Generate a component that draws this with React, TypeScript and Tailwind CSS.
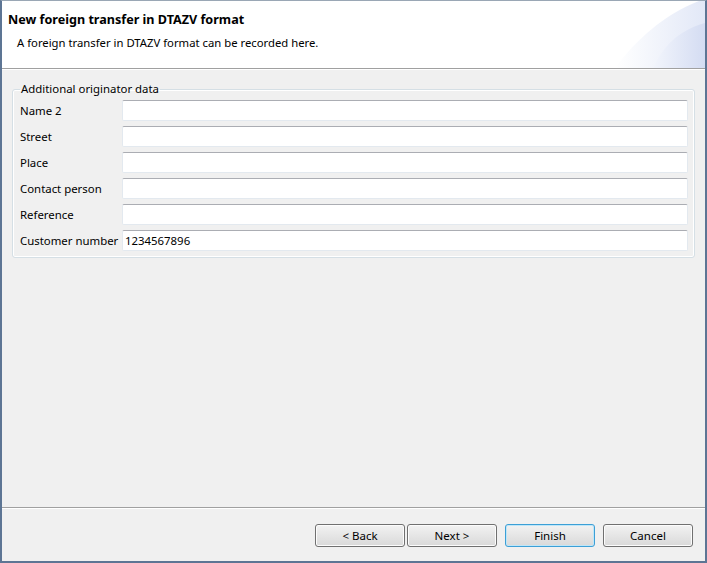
import React from 'react';

const fields = [
  { label: 'Name 2', value: '' },
  { label: 'Street', value: '' },
  { label: 'Place', value: '' },
  { label: 'Contact person', value: '' },
  { label: 'Reference', value: '' },
  { label: 'Customer number', value: '1234567896' },
];

const font = '"Noto Sans", "Open Sans", sans-serif';

const WizardButton = ({ label, primary, className = '' }: { label: string; primary?: boolean; className?: string }) => (
  <button
    className={`w-[90px] h-[23px] shrink-0 rounded-[3px] border text-[11.5px] leading-none text-black bg-gradient-to-b from-[#f2f2f2] to-[#d9d9d9] ${
      primary ? 'border-[#3c9fd6] shadow-[inset_0_0_0_1px_#bfe6f8]' : 'border-[#707070] shadow-[inset_0_0_0_1px_#fcfcfc]'
    } ${className}`}
    style={{ fontFamily: font }}
  >
    {label}
  </button>
);

export default function App() {
  return (
    <div
      className="w-[707px] h-[563px] bg-[#f0f0f0] flex flex-col border-l-2 border-r-2 border-b-2 border-t border-l-[#5d7594] border-r-[#5d7594] border-b-[#5d7594] border-t-[#9aa7b5] overflow-hidden"
      style={{ fontFamily: font }}
    >
      {/* header */}
      <div className="relative h-[67px] bg-white shrink-0 overflow-hidden">
        <svg className="absolute right-0 top-0" width="100" height="67" viewBox="0 0 100 67">
          <defs>
            <linearGradient id="sw1" x1="0" y1="0" x2="1" y2="0">
              <stop offset="0" stopColor="#ffffff" />
              <stop offset="1" stopColor="#e2e8f7" />
            </linearGradient>
            <linearGradient id="sw2" x1="0" y1="0" x2="1" y2="0">
              <stop offset="0" stopColor="#f2f5fc" />
              <stop offset="1" stopColor="#d4dcf2" />
            </linearGradient>
          </defs>
          <path d="M10,67 C30,40 58,14 94,0 L100,0 L100,67 Z" fill="url(#sw1)" />
          <path d="M48,67 C58,46 72,30 100,22 L100,67 Z" fill="url(#sw2)" />
        </svg>
        <div className="relative pl-[6px] pt-[10px]">
          <div className="text-[12.6px] font-bold leading-[18px] text-black">New foreign transfer in DTAZV format</div>
          <div className="pl-[9px] pt-[6px] text-[11.3px] leading-[16px] text-black">
            A foreign transfer in DTAZV format can be recorded here.
          </div>
        </div>
      </div>
      <div className="h-px bg-[#a0a0a0] shrink-0" />
      <div className="h-px bg-white shrink-0" />

      {/* body */}
      <div className="flex-1 px-[10px] pt-[12px]">
        <fieldset className="border border-[#d5dfe5] rounded-[3px] pl-[7px] pr-[6px] pb-[6px] pt-0 shadow-[inset_0_0_0_1px_#ffffff]">
          <legend className="px-[1px] text-[11.4px] leading-[14px] text-black">Additional originator data</legend>
          <div className="flex flex-col gap-[5px] pt-[4px]">
            {fields.map((f) => (
              <div key={f.label} className="flex items-center">
                <span className="w-[102px] shrink-0 text-[11.4px] text-black whitespace-nowrap">{f.label}</span>
                <input
                  readOnly
                  value={f.value}
                  className="flex-1 h-[21px] bg-white border border-[#e3e9ef] border-t-[#abadb3] rounded-[2px] px-[2px] text-[11.4px] text-black outline-none"
                  style={{ fontFamily: font }}
                />
              </div>
            ))}
          </div>
        </fieldset>
      </div>

      {/* footer */}
      <div className="h-px bg-[#a0a0a0] shrink-0" />
      <div className="h-px bg-white shrink-0" />
      <div className="h-[52px] shrink-0 flex items-start justify-end pt-[15px] pr-[12px]">
        <WizardButton label="< Back" />
        <WizardButton label="Next >" className="ml-[2px]" />
        <WizardButton label="Finish" primary className="ml-[8px]" />
        <WizardButton label="Cancel" className="ml-[8px]" />
      </div>
    </div>
  );
}
